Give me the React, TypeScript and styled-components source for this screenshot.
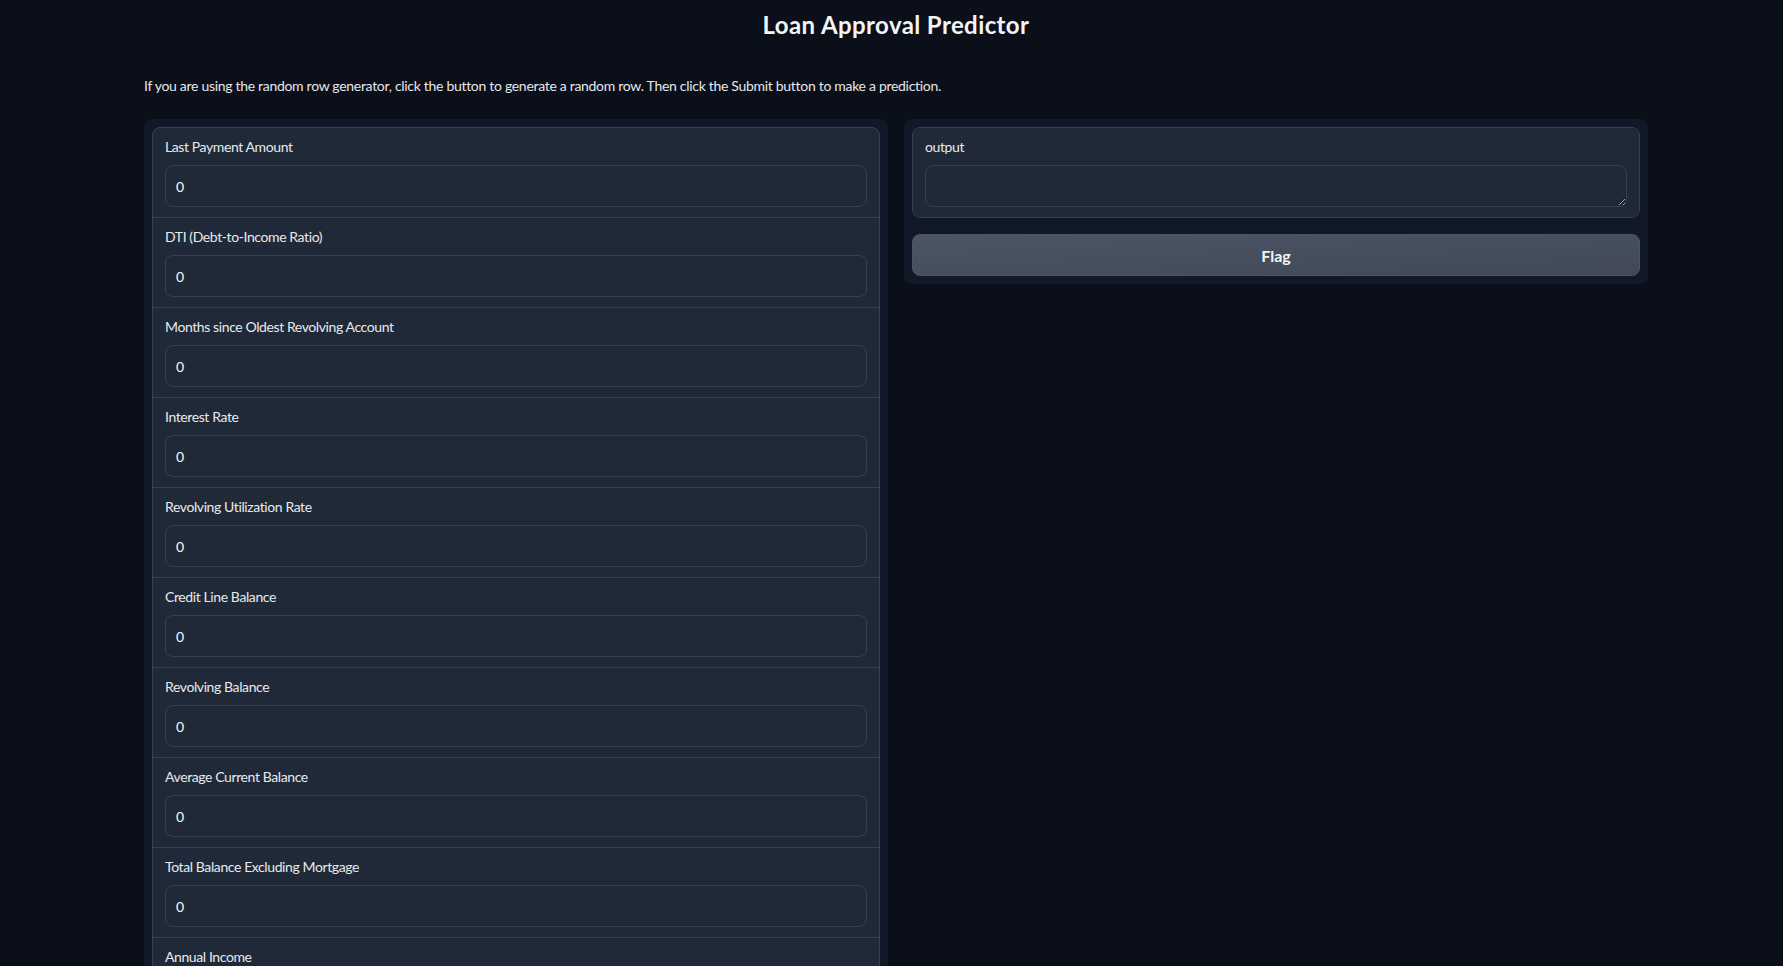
import React from "react";
import styled, { createGlobalStyle } from "styled-components";

const Global = createGlobalStyle`
  html, body { margin: 0; padding: 0; background: #0b0f19; scrollbar-width: none; }
  body::-webkit-scrollbar { display: none; }
  body { font-family: Lato, "Noto Sans", sans-serif; color: #e5e7eb; }
  * { box-sizing: border-box; }
`;

const Page = styled.div`
  width: 1504px;
  margin-left: 144px;
  padding-top: 10px;
  display: flex;
  flex-direction: column;
`;

const Title = styled.h1`
  margin: 0;
  text-align: center;
  font-size: 24px;
  line-height: 30px;
  font-weight: 700;
  letter-spacing: 0.4px;
  color: #f3f4f6;
`;

const Intro = styled.p`
  margin: 36px 0 0;
  font-size: 14px;
  line-height: 20px;
  color: #e5e7eb;
  letter-spacing: -0.3px;
`;

const Row = styled.div`
  margin-top: 23px;
  display: grid;
  grid-template-columns: 1fr 1fr;
  gap: 16px;
  align-items: start;
`;

const Panel = styled.div`
  background: #111827;
  border-radius: 8px;
  padding: 8px;
  display: flex;
  flex-direction: column;
  gap: 16px;
`;

const Form = styled.div`
  background: #374151;
  border: 1px solid #374151;
  border-radius: 8px;
  overflow: hidden;
  display: flex;
  flex-direction: column;
  gap: 1px;
`;

const Block = styled.label`
  background: #1f2937;
  padding: 10px 12px;
  display: flex;
  flex-direction: column;
`;

const Label = styled.span`
  font-size: 14px;
  line-height: 17px;
  margin-bottom: 10px;
  color: #e8eaee;
  letter-spacing: -0.4px;
`;

const fieldCss = `
  width: 100%;
  height: 42px;
  background: #1f2937;
  border: 1px solid #374151;
  border-radius: 8px;
  padding: 10px;
  font-family: Lato, "Noto Sans", sans-serif;
  font-size: 14px;
  line-height: 20px;
  color: #f9fafb;
  outline: none;
  display: block;
`;

const Input = styled.input`
  ${fieldCss}
`;

const TextArea = styled.textarea`
  ${fieldCss}
  resize: vertical;
`;

const Button = styled.button`
  height: 42px;
  border: 1px solid #4b5563;
  border-radius: 8px;
  background: linear-gradient(to bottom right, #4b5563, #414957);
  color: #f3f4f6;
  font-family: Lato, "Noto Sans", sans-serif;
  font-size: 16px;
  font-weight: 700;
  cursor: pointer;
`;

const fields = [
  "Last Payment Amount",
  "DTI (Debt-to-Income Ratio)",
  "Months since Oldest Revolving Account",
  "Interest Rate",
  "Revolving Utilization Rate",
  "Credit Line Balance",
  "Revolving Balance",
  "Average Current Balance",
  "Total Balance Excluding Mortgage",
  "Annual Income",
];

export default function App() {
  return (
    <>
      <Global />
      <Page>
        <Title>Loan Approval Predictor</Title>
        <Intro>
          If you are using the random row generator, click the button to generate a random row. Then click the Submit button to make a prediction.
        </Intro>
        <Row>
          <Panel>
            <Form>
              {fields.map((f) => (
                <Block key={f}>
                  <Label>{f}</Label>
                  <Input type="text" readOnly defaultValue="0" />
                </Block>
              ))}
            </Form>
          </Panel>
          <Panel>
            <Form>
              <Block>
                <Label>output</Label>
                <TextArea readOnly rows={1} />
              </Block>
            </Form>
            <Button>Flag</Button>
          </Panel>
        </Row>
      </Page>
    </>
  );
}
